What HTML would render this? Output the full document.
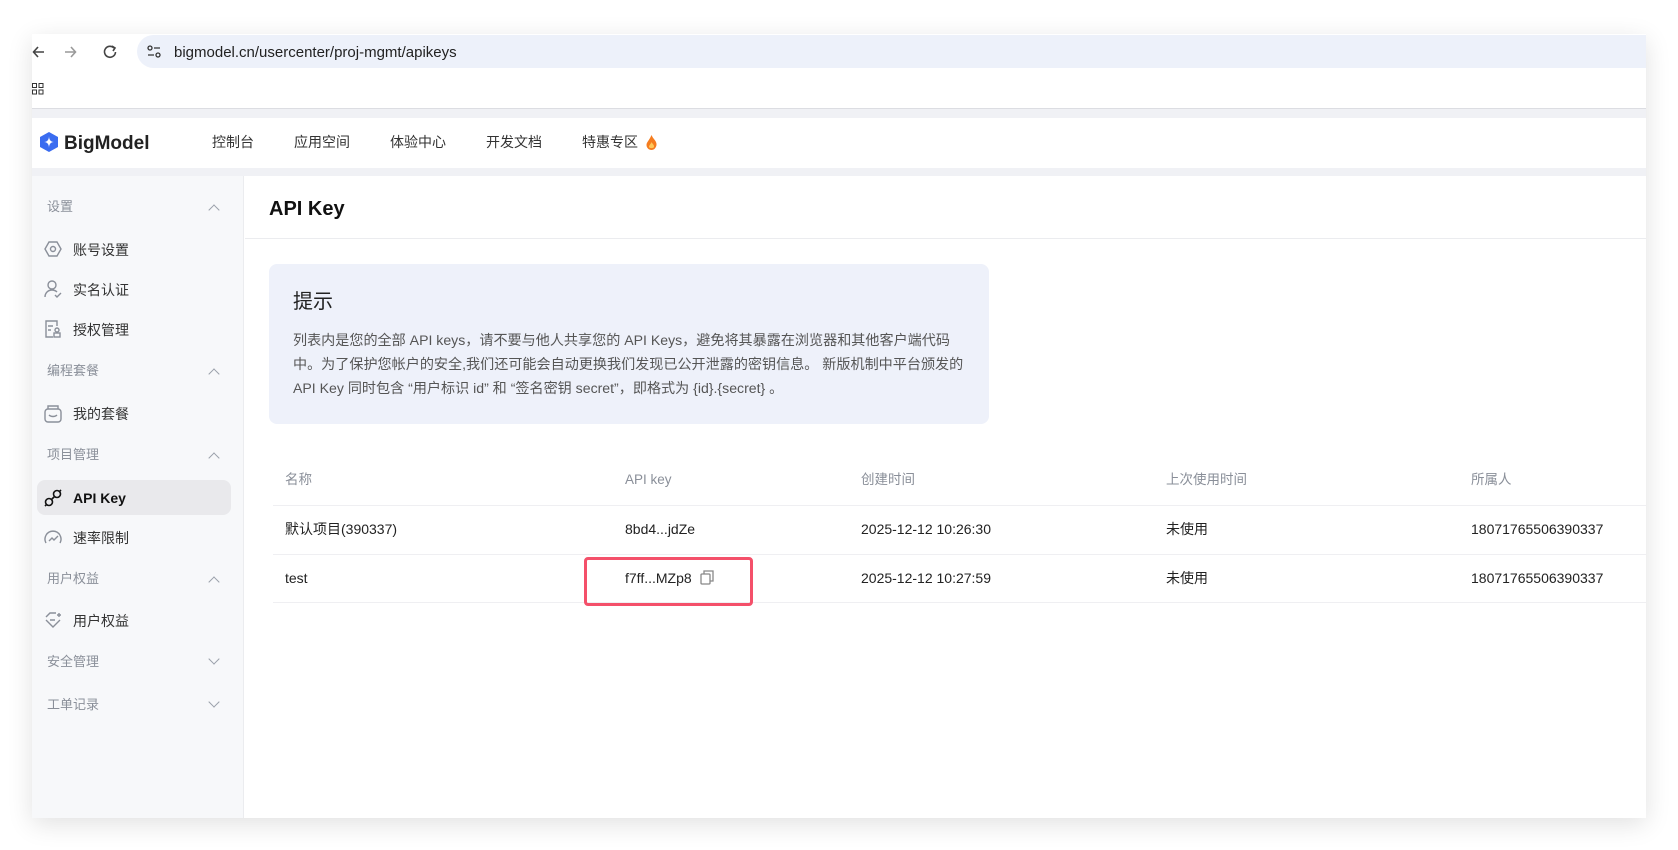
<!DOCTYPE html>
<html><head><meta charset="utf-8"><style>
*{margin:0;padding:0;box-sizing:border-box}
body{width:1678px;height:850px;background:#fff;position:relative;overflow:hidden;font-family:"Liberation Sans","Noto Sans CJK SC",sans-serif;color:#222}
.a{position:absolute;white-space:nowrap;line-height:20px}
#frame{position:absolute;left:32px;top:34px;width:1614px;height:784px;background:#fff;box-shadow:0 6px 24px rgba(0,0,0,0.12);overflow:hidden}
.sec{font-size:13px;color:#8a8f99}
.it{font-size:14px;color:#333}
.nav{font-size:14px;color:#333}
.th{font-size:13.5px;color:#8a8f99}
.td{font-size:14px;color:#222}
.chev{position:absolute;width:8px;height:8px;border-left:1.5px solid #9aa0aa;border-top:1.5px solid #9aa0aa}
</style></head><body>
<div id="frame">
 <div class="a" style="left:105px;top:1px;width:1509px;height:33px;background:#edf1fa;border-radius:17px 0 0 17px"></div>
 <svg class="a" style="left:0;top:10px" width="90" height="16" viewBox="0 0 90 16"><path d="M12 8H2M6 3L1.5 8 6 13" stroke="#444" stroke-width="1.6" fill="none"/><path d="M33 8h10M39 3l4.5 5-4.5 5" stroke="#999" stroke-width="1.6" fill="none"/><path d="M82 4a5.5 5.5 0 1 0 1.5 4" stroke="#444" stroke-width="1.6" fill="none"/><path d="M80 2l3 2-2 3" stroke="#444" stroke-width="1.6" fill="none"/></svg>
 <svg class="a" style="left:115px;top:11px" width="14" height="14"><circle cx="3" cy="3" r="2" stroke="#333" fill="none" stroke-width="1.3"/><path d="M7 3h6M1 10h6" stroke="#333" stroke-width="1.3"/><circle cx="11" cy="10" r="2" stroke="#333" fill="none" stroke-width="1.3"/></svg>
 <div class="a" style="left:142px;top:7px;font-size:15px;color:#222;line-height:24px">bigmodel.cn/usercenter/proj-mgmt/apikeys</div>
 <svg class="a" style="left:0;top:49px" width="12" height="12"><rect x="0.5" y="0.5" width="4" height="4" stroke="#333" fill="none"/><rect x="7" y="0.5" width="4" height="4" stroke="#333" fill="none"/><rect x="0.5" y="7" width="4" height="4" stroke="#333" fill="none"/><rect x="7" y="7" width="4" height="4" stroke="#333" fill="none"/></svg>
 <div class="a" style="left:0;top:74px;width:1614px;height:10px;background:#f0f1f5;border-top:1px solid #dcdde2"></div>
 <svg class="a" style="left:7px;top:97px" width="20" height="22" viewBox="0 0 20 22"><path d="M10 1L19 6v10l-9 5-9-5V6z" fill="#3a6cf0"/><path d="M10 5c0 4 2 6 5 6-3 0-5 2-5 6 0-4-2-6-5-6 3 0 5-2 5-6z" fill="#fff"/></svg>
 <div class="a" style="left:32px;top:98px;font-size:19px;font-weight:600;color:#222;line-height:24px">BigModel</div>
 <div class="a nav" style="left:180px;top:98px">控制台</div>
 <div class="a nav" style="left:262px;top:98px">应用空间</div>
 <div class="a nav" style="left:358px;top:98px">体验中心</div>
 <div class="a nav" style="left:454px;top:98px">开发文档</div>
 <div class="a nav" style="left:550px;top:98px">特惠专区</div>
 <svg class="a" style="left:614px;top:101px" width="11" height="15" viewBox="0 0 11 15"><path d="M5.5 0C7 4 11 6 10.5 10 10 13 8 15 5.5 15 3 15 0.5 13 0.5 10 0.5 7 3 6 5.5 0z" fill="#f57c1f"/><path d="M5.5 7c1 2 3 3 2.5 5-.5 1.5-4.5 1.5-5 0 0-2 2-3 2.5-5z" fill="#ffc85a"/></svg>
 <div class="a" style="left:0;top:134px;width:1614px;height:8px;background:#f0f1f5"></div>
 <div class="a" style="left:0;top:142px;width:212px;height:642px;background:#f7f8fa;border-right:1px solid #ebecef"></div>
 <div class="a sec" style="left:15px;top:163px">设置</div><div class="chev" style="left:178px;top:172px;transform:rotate(45deg)"></div>
 <svg class="a" style="left:12px;top:207px" width="18" height="16"><path d="M5 1h8l4 7-4 7H5L1 8z" stroke="#8a8f99" stroke-width="1.4" fill="none"/><circle cx="9" cy="8" r="2.5" stroke="#8a8f99" stroke-width="1.4" fill="none"/></svg>
 <div class="a it" style="left:41px;top:206px">账号设置</div>
 <svg class="a" style="left:12px;top:246px" width="18" height="18"><circle cx="8" cy="5" r="4" stroke="#8a8f99" stroke-width="1.4" fill="none"/><path d="M1 17c0-4 3-7 7-7 2 0 4 1 5 2M11 15l2 2 4-4" stroke="#8a8f99" stroke-width="1.4" fill="none"/></svg>
 <div class="a it" style="left:41px;top:246px">实名认证</div>
 <svg class="a" style="left:12px;top:286px" width="18" height="18"><path d="M9 1H2v16h7M4 6h5M4 10h3" stroke="#8a8f99" stroke-width="1.4" fill="none"/><path d="M9 1h4v5" stroke="#8a8f99" stroke-width="1.4" fill="none"/><circle cx="13" cy="10" r="2" stroke="#8a8f99" stroke-width="1.4" fill="none"/><rect x="10" y="13" width="6" height="4" stroke="#8a8f99" stroke-width="1.4" fill="none"/></svg>
 <div class="a it" style="left:41px;top:286px">授权管理</div>
 <div class="a sec" style="left:15px;top:327px">编程套餐</div><div class="chev" style="left:178px;top:336px;transform:rotate(45deg)"></div>
 <svg class="a" style="left:12px;top:371px" width="18" height="18"><rect x="1" y="4" width="16" height="13" rx="3" stroke="#8a8f99" stroke-width="1.4" fill="none"/><path d="M4 4V1h10v3M5 10c2 2 6 2 8 0" stroke="#8a8f99" stroke-width="1.4" fill="none"/></svg>
 <div class="a it" style="left:41px;top:370px">我的套餐</div>
 <div class="a sec" style="left:15px;top:411px">项目管理</div><div class="chev" style="left:178px;top:420px;transform:rotate(45deg)"></div>
 <div class="a" style="left:5px;top:446px;width:194px;height:35px;background:#e9e9ec;border-radius:8px"></div>
 <svg class="a" style="left:12px;top:455px" width="18" height="18"><circle cx="5" cy="13" r="3.5" stroke="#111" stroke-width="1.6" fill="none"/><circle cx="13" cy="5" r="3.5" stroke="#111" stroke-width="1.6" fill="none"/><path d="M7.5 10.5l3-3M1 17l2-2M15 3l2-2" stroke="#111" stroke-width="1.6"/></svg>
 <div class="a" style="left:41px;top:454px;font-size:14px;font-weight:700;color:#111">API Key</div>
 <svg class="a" style="left:12px;top:495px" width="18" height="18"><path d="M2 14A8 8 0 1 1 16 14" stroke="#8a8f99" stroke-width="1.4" fill="none"/><path d="M5 12l3-3 2 2 4-4" stroke="#8a8f99" stroke-width="1.4" fill="none"/></svg>
 <div class="a it" style="left:41px;top:494px">速率限制</div>
 <div class="a sec" style="left:15px;top:535px">用户权益</div><div class="chev" style="left:178px;top:544px;transform:rotate(45deg)"></div>
 <svg class="a" style="left:12px;top:578px" width="20" height="16"><path d="M2 5l4-4h6M16 8L9 15 2 8" stroke="#8a8f99" stroke-width="1.4" fill="none"/><path d="M6 8h5M15 1v4M13 3h4" stroke="#8a8f99" stroke-width="1.4"/></svg>
 <div class="a it" style="left:41px;top:577px">用户权益</div>
 <div class="a sec" style="left:15px;top:618px">安全管理</div><div class="chev" style="left:178px;top:621px;transform:rotate(225deg)"></div>
 <div class="a sec" style="left:15px;top:661px">工单记录</div><div class="chev" style="left:178px;top:664px;transform:rotate(225deg)"></div>
 <div class="a" style="left:237px;top:163px;font-size:20px;font-weight:700;color:#111;line-height:24px">API Key</div>
 <div class="a" style="left:213px;top:204px;width:1401px;height:1px;background:#ebecef"></div>
 <div class="a" style="left:237px;top:230px;width:720px;height:160px;background:#eef1fa;border-radius:8px"></div>
 <div class="a" style="left:261px;top:254px;font-size:20px;color:#222;line-height:28px">提示</div>
 <div class="a" style="left:261px;top:294px;font-size:14.1px;line-height:24px;color:#555">列表内是您的全部 API keys，请不要与他人共享您的 API Keys，避免将其暴露在浏览器和其他客户端代码<br>中。为了保护您帐户的安全,我们还可能会自动更换我们发现已公开泄露的密钥信息。 新版机制中平台颁发的<br>API Key 同时包含 “用户标识 id” 和 “签名密钥 secret”，即格式为 {id}.{secret} 。</div>
 <div class="a th" style="left:253px;top:436px">名称</div>
 <div class="a th" style="left:593px;top:436px">API key</div>
 <div class="a th" style="left:829px;top:436px">创建时间</div>
 <div class="a th" style="left:1134px;top:436px">上次使用时间</div>
 <div class="a th" style="left:1439px;top:436px">所属人</div>
 <div class="a" style="left:241px;top:471px;width:1373px;height:1px;background:#efeff2"></div>
 <div class="a td" style="left:253px;top:485px">默认项目(390337)</div>
 <div class="a td" style="left:593px;top:485px">8bd4...jdZe</div>
 <div class="a td" style="left:829px;top:485px">2025-12-12 10:26:30</div>
 <div class="a td" style="left:1134px;top:485px">未使用</div>
 <div class="a td" style="left:1439px;top:485px">18071765506390337</div>
 <div class="a" style="left:241px;top:520px;width:1373px;height:1px;background:#efeff2"></div>
 <div class="a td" style="left:253px;top:534px">test</div>
 <div class="a td" style="left:593px;top:534px">f7ff...MZp8</div>
 <svg class="a" style="left:668px;top:536px" width="14" height="15"><rect x="1" y="4" width="9" height="10" rx="1" stroke="#888" stroke-width="1.3" fill="none"/><path d="M4 4V1h9v10h-3" stroke="#888" stroke-width="1.3" fill="none"/></svg>
 <div class="a td" style="left:829px;top:534px">2025-12-12 10:27:59</div>
 <div class="a td" style="left:1134px;top:534px">未使用</div>
 <div class="a td" style="left:1439px;top:534px">18071765506390337</div>
 <div class="a" style="left:241px;top:568px;width:1373px;height:1px;background:#efeff2"></div>
 <div class="a" style="left:552px;top:523px;width:169px;height:49px;border:3px solid #f4506a;border-radius:4px"></div>
</div>
</body></html>
